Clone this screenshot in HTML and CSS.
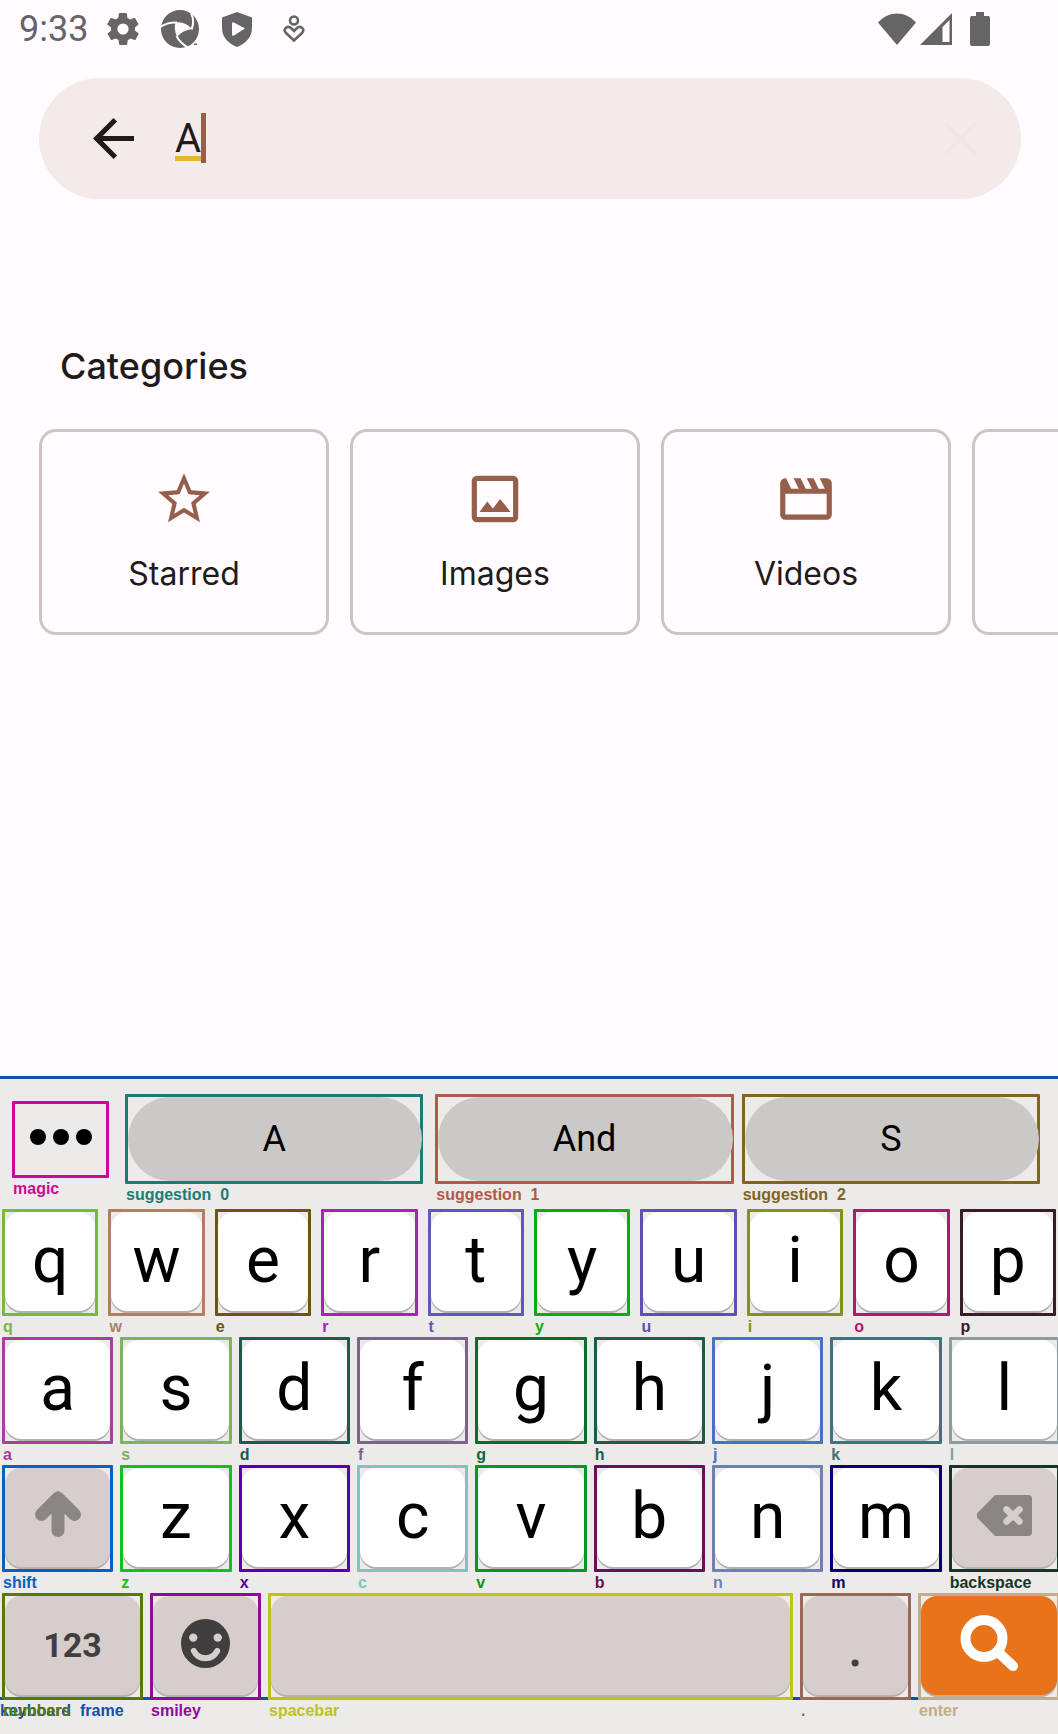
FILE: index.html
```html
<!DOCTYPE html>
<html lang="en">
<head>
<meta charset="utf-8">
<meta name="viewport" content="width=device-width, initial-scale=1">
<title>Search files</title>
<link rel="stylesheet" href="styles.css">
</head>
<body>
<header class="status">
  <span class="time">9:33</span>
  <svg class="st-gear" viewBox="2 2 20 20"><path d="M19.4 13c0-.3.1-.6.1-1s0-.7-.1-1l2.1-1.600c.2-.2.2-.4.1-.6l-2-3.500c-.1-.2-.4-.3-.6-.2l-2.500 1c-.5-.4-1.100-.7-1.700-1l-.4-2.600c0-.3-.2-.5-.5-.5h-4c-.2 0-.5.2-.5.4l-.4 2.700c-.6.2-1.100.6-1.700 1l-2.500-1c-.2-.1-.5 0-.6.2l-2 3.500c-.1.200-.1.500.1.600L4.600 11c0 .3-.1.600-.1 1s0 .7.1 1l-2.100 1.600c-.2.2-.2.4-.1.600l2 3.500c.1.2.4.3.6.2l2.500-1c.5.4 1.100.7 1.700 1l.4 2.600c0 .3.300.5.500.5h4c.2 0 .5-.2.5-.4l.4-2.700c.6-.2 1.100-.6 1.700-1l2.500 1c.2.100.5 0 .6-.2l2-3.500c.1-.2.100-.5-.1-.6zM12 15.500a3.500 3.500 0 1 1 0-7 3.500 3.500 0 0 1 0 7z"/></svg>
  <svg class="st-wheel" viewBox="0 0 40 40"><circle cx="20" cy="20" r="19"/><path class="cut" d="M15.500 13.500Q25 12 32 20Q23 21 17 28Q13.500 20 15.500 13.500z"/><path class="slit" d="M17 13.500Q8 13 0 18M31.500 20.500Q35 12 31 4M16.500 27Q20 34 28 38.500"/><path d="M34 34.500h3v1.500h-3z"/></svg>
  <svg class="st-shield" viewBox="0 0 30 36"><path d="M15 1L30 6.500V17c0 9-6 15.500-15 19C6 32.500 0 26 0 17V6.500z"/><path class="cut" d="M10 11.500h2l11 6-11 7h-2z"/></svg>
  <svg class="st-heart" viewBox="0 0 22 28"><g fill="none" stroke="#676468" stroke-width="2.600"><circle cx="11" cy="5.500" r="4"/><path d="M11 25.500l-8-7.500c-3.500-4 1.500-8 5-5l3 3 3-3c3.500-3 8.500 1 5 5z"/></g></svg>
  <span class="st-right">
    <svg class="st-wifi" viewBox="0 0 38 32"><path d="M0 9.500C11-2.500 27-2.500 38 9.500L19 32z"/></svg>
    <svg class="st-signal" viewBox="0 0 32 32"><path fill-rule="evenodd" d="M32 0v32H0zM29.500 7L22.500 14v15h7z"/></svg>
    <svg class="st-battery" viewBox="0 0 20 34"><path d="M6 0h8v4h4a2 2 0 0 1 2 2v26a2 2 0 0 1-2 2H2a2 2 0 0 1-2-2V6a2 2 0 0 1 2-2h4z"/></svg>
  </span>
</header>

<main>
  <form class="search">
    <button type="button" class="icon-btn" aria-label="Back"><svg class="back" viewBox="4 4 16 16"><path d="M20 11H7.800l5.600-5.600L12 4l-8 8 8 8 1.400-1.400L7.800 13H20z"/></svg></button>
    <div class="field">
      <input type="text" value="A" aria-label="Search">
      <span class="composing"></span><span class="caret"></span>
    </div>
    <button type="button" class="icon-btn clear" aria-label="Clear"><svg class="back" viewBox="4 4 16 16"><path d="M6 6l12 12M18 6L6 18" stroke="#f2e7e6" stroke-width="1.500"/></svg></button>
  </form>

  <h1>Categories</h1>
  <div class="cards">
    <button type="button" class="card">
      <svg viewBox="0 0 24 24"><path d="M22 9.240l-7.190-.62L12 2 9.190 8.630 2 9.240l5.460 4.730L5.820 21 12 17.270 18.180 21l-1.630-7.030L22 9.240zM12 15.400l-3.760 2.270 1-4.280-3.320-2.880 4.380-.38L12 6.100l1.710 4.040 4.380.38-3.320 2.880 1 4.280L12 15.400z"/></svg>
      <span>Starred</span></button>
    <button type="button" class="card">
      <svg viewBox="0 0 24 24"><path fill-rule="evenodd" d="M5 3h14a2 2 0 0 1 2 2v14a2 2 0 0 1-2 2H5a2 2 0 0 1-2-2V5a2 2 0 0 1 2-2zm0 2v14h14V5zM6 17l3-4 2.200 2.700L14 12l4 5z"/></svg>
      <span>Images</span></button>
    <button type="button" class="card">
      <svg viewBox="0 0 24 24"><path d="M17.300 4l2 4h-2.400l-2-4h-2.600l2 4h-2.400l-2-4H7.200l2 4H6.300l-2-4H4a2 2 0 0 0-2 2v12a2 2 0 0 0 2 2h16a2 2 0 0 0 2-2V6a2 2 0 0 0-2-2zM4 18v-8h16v8z"/></svg>
      <span>Videos</span></button>
    <button type="button" class="card" aria-label="More"></button>
  </div>
</main>

<section class="keyboard">
  <div class="suggestions">
    <div class="cell magic c-magic"><button type="button" aria-label="magic"><svg viewBox="0 0 62 16"><circle cx="8" cy="8" r="8"/><circle cx="31" cy="8" r="8"/><circle cx="54" cy="8" r="8"/></svg></button><span class="tag">magic</span></div>
    <div class="cell sug c-s0"><button type="button">A</button><span class="tag">suggestion&nbsp; 0</span></div>
    <div class="cell sug c-s1"><button type="button">And</button><span class="tag">suggestion&nbsp; 1</span></div>
    <div class="cell sug c-s2"><button type="button">S</button><span class="tag">suggestion&nbsp; 2</span></div>
  </div>
  <div class="row ten">
    <div class="cell c-q"><button type="button">q</button><span class="tag">q</span></div>
    <div class="cell c-w"><button type="button">w</button><span class="tag">w</span></div>
    <div class="cell c-e"><button type="button">e</button><span class="tag">e</span></div>
    <div class="cell c-r"><button type="button">r</button><span class="tag">r</span></div>
    <div class="cell c-t"><button type="button">t</button><span class="tag">t</span></div>
    <div class="cell c-y"><button type="button">y</button><span class="tag">y</span></div>
    <div class="cell c-u"><button type="button">u</button><span class="tag">u</span></div>
    <div class="cell c-i"><button type="button">i</button><span class="tag">i</span></div>
    <div class="cell c-o"><button type="button">o</button><span class="tag">o</span></div>
    <div class="cell c-p"><button type="button">p</button><span class="tag">p</span></div>
  </div>
  <div class="row nine">
    <div class="cell c-a"><button type="button">a</button><span class="tag">a</span></div>
    <div class="cell c-s"><button type="button">s</button><span class="tag">s</span></div>
    <div class="cell c-d"><button type="button">d</button><span class="tag">d</span></div>
    <div class="cell c-f"><button type="button">f</button><span class="tag">f</span></div>
    <div class="cell c-g"><button type="button">g</button><span class="tag">g</span></div>
    <div class="cell c-h"><button type="button">h</button><span class="tag">h</span></div>
    <div class="cell c-j"><button type="button">j</button><span class="tag">j</span></div>
    <div class="cell c-k"><button type="button">k</button><span class="tag">k</span></div>
    <div class="cell c-l"><button type="button">l</button><span class="tag">l</span></div>
  </div>
  <div class="row nine">
    <div class="cell fn c-shift"><button type="button" aria-label="shift"><svg class="shift" viewBox="0 0 46 46"><path d="M23 7v32.500M6.500 23.500L23 7l16.500 16.500" fill="none" stroke="#8a8685" stroke-width="13" stroke-linecap="round" stroke-linejoin="round"/></svg></button><span class="tag">shift</span></div>
    <div class="cell c-z"><button type="button">z</button><span class="tag">z</span></div>
    <div class="cell c-x"><button type="button">x</button><span class="tag">x</span></div>
    <div class="cell c-c"><button type="button">c</button><span class="tag">c</span></div>
    <div class="cell c-v"><button type="button">v</button><span class="tag">v</span></div>
    <div class="cell c-b"><button type="button">b</button><span class="tag">b</span></div>
    <div class="cell c-n"><button type="button">n</button><span class="tag">n</span></div>
    <div class="cell c-m"><button type="button">m</button><span class="tag">m</span></div>
    <div class="cell fn c-bksp"><button type="button" aria-label="backspace"><svg class="bksp" viewBox="0 0 55 41"><path d="M18 0h33a4 4 0 0 1 4 4v33a4 4 0 0 1-4 4H18L1 23.500a4 4 0 0 1 0-6z" fill="#8a8685"/><path d="M29.500 14.500l13 12M42.500 14.500l-13 12" stroke="#d7cecc" stroke-width="6.500" stroke-linecap="round"/></svg></button><span class="tag">backspace</span></div>
  </div>
  <div class="row bottom">
    <span class="frame-tag">keyboard&nbsp; frame</span>
    <div class="cell fn c-num"><button type="button" class="num">123</button><span class="tag">numbers</span></div>
    <div class="cell fn c-smile"><button type="button" aria-label="smiley"><svg class="smile" viewBox="0 0 50 50"><circle cx="25" cy="25" r="25" fill="#403e3e"/><circle cx="12.500" cy="19" r="4.300" fill="#d7cecc"/><circle cx="37.500" cy="19" r="4.300" fill="#d7cecc"/><path d="M13 32.500c5 10 19 10 24 0" fill="none" stroke="#d7cecc" stroke-width="6" stroke-linecap="round"/></svg></button><span class="tag">smiley</span></div>
    <div class="cell fn c-space"><button type="button" aria-label="spacebar"></button><span class="tag">spacebar</span></div>
    <div class="cell fn c-dot"><button type="button">.</button><span class="tag">.</span></div>
    <div class="cell go c-enter"><button type="button" aria-label="enter"><svg class="find" viewBox="0 0 58 56"><circle cx="24" cy="23.500" r="18.500" fill="none" stroke="#fff" stroke-width="10"/><path d="M38 37l15 14" stroke="#fff" stroke-width="10" stroke-linecap="round"/></svg></button><span class="tag">enter</span></div>
  </div>
</section>
</body>
</html>
```
FILE: styles.css
```css
* { box-sizing: border-box; }
html, body { margin: 0; }
body {
  display: flex;
  flex-direction: column;
  min-height: 100vh;
  overflow-x: hidden;
  background: #fffbff;
  color: #1f1b1a;
  font-family: Roboto, sans-serif;
}
svg { display: block; flex: none; }
button { border: 0; padding: 0; margin: 0; color: inherit; background: none; font: inherit; }

.status {
  display: flex;
  align-items: center;
  height: 58px;
  padding: 0 68px 0 19px;
  fill: #676468;
  color: #676468;
}
.time { width: 88px; font-size: 36px; line-height: 58px; }
.status .cut { fill: #fffbff; }
.status .slit { fill: none; stroke: #fffbff; stroke-width: 2; }
.st-gear { width: 32px; height: 32px; }
.st-wheel { width: 40px; height: 40px; margin-left: 21px; }
.st-shield { width: 30px; height: 36px; margin-left: 22px; }
.st-heart { width: 22px; height: 28px; margin-left: 31px; }
.st-right { display: flex; align-items: center; margin-left: auto; }
.st-wifi { width: 38px; height: 32px; }
.st-signal { width: 32px; height: 32px; margin: 0 18px 0 4px; }
.st-battery { width: 20px; height: 34px; }

.search {
  display: flex;
  align-items: center;
  height: 121px;
  margin: 20px 37px 0 39px;
  padding: 0 40px 0 54px;
  border-radius: 61px;
  background: #f4eae9;
}
.icon-btn { flex: none; }
.back { width: 41px; height: 41px; fill: #1f1b1a; }
.field { position: relative; flex: 1; margin-left: 41px; }
.field input {
  display: block;
  width: 100%;
  height: 60px;
  padding: 0;
  border: 0;
  outline: 0;
  background: none;
  color: #1f1b1a;
  font: 40px Roboto, sans-serif;
}
.composing { position: absolute; left: 0; top: 47px; width: 28px; height: 5px; background: #e6b534; }
.caret { position: absolute; left: 26px; top: 4px; width: 5px; height: 50px; background: #955f4b; }

h1 {
  margin: 144px 0 0 60px;
  font: 500 36px/46px Inter, sans-serif;
}
.cards {
  display: flex;
  gap: 21px;
  margin: 40px 0 60px;
  padding-left: 39px;
  overflow: hidden;
}
.card {
  display: flex;
  flex: none;
  flex-direction: column;
  align-items: center;
  gap: 24px;
  width: 290px;
  height: 206px;
  padding-top: 36px;
  border: 3px solid #cfc4c1;
  border-radius: 17px;
  font: 32px/40px Inter, sans-serif;
}
.card svg { width: 62px; height: 62px; fill: #955f4b; }

.keyboard {
  margin-top: auto;
  padding-bottom: 13px;
  overflow: hidden;
  border-top: 3px solid #1450a8;
  background: #ecebe9;
}
.cell { position: relative; min-width: 0; color: var(--c); }
.cell button {
  position: relative;
  z-index: 0;
  display: flex;
  align-items: center;
  justify-content: center;
  width: 100%;
  height: 107px;
  padding-bottom: 4px;
  border: 3px solid var(--c);
  border-radius: 1px;
  color: #000;
  background: #ecebe9;
  font-size: 64px;
  line-height: 64px;
}
.cell button::before {
  content: "";
  position: absolute;
  z-index: -1;
  inset: 0 0 2px;
  border-radius: 16px;
  background: #fff;
  box-shadow: 0 2px 0 #b4b1af;
}
.fn button::before { background: #d7cecc; }
.go button::before { background: #e8731a; }
.tag {
  display: block;
  height: 21px;
  padding-left: 1px;
  font: bold 16px/21px "Liberation Sans", sans-serif;
  white-space: nowrap;
}
.suggestions {
  display: flex;
  align-items: flex-end;
  gap: 8px;
  padding: 15px 18px 4px 12px;
}
.magic { flex: none; width: 97px; align-self: center; }
.magic button { height: 77px; }
.magic svg { width: 62px; height: 16px; }
.magic button::before { display: none; }
.sug { flex: 1; }
.c-s0 { margin-left: 8px; }
.c-s1 { margin-left: 4px; }
.sug button { height: 90px; padding: 0; font-size: 36px; line-height: 40px; }
.sug button::before { inset: 0 -2px 0 0; border-radius: 42px; background: #cac9c7; box-shadow: none; }

.row { display: grid; position: relative; }
.ten { grid-template-columns: repeat(10, 1fr); gap: 10px; padding: 0 2px; }
.nine { grid-template-columns: repeat(9, 1fr); gap: 7px; margin: 0 -2px 0 2px; }
.bottom { grid-template-columns: 141fr 111fr 525fr 111fr 142fr; gap: 7px; margin: 0 -2px 0 2px; }
.bottom::before { content: ""; position: absolute; left: -2px; right: 0; top: 104px; height: 3px; background: #1450a8; }
.frame-tag {
  position: absolute;
  left: -2px;
  top: 107px;
  color: #1450a8;
  font: bold 16px/21px "Liberation Sans", sans-serif;
  white-space: nowrap;
}
.cell .num { color: #403e3e; font-size: 34px; font-weight: 700; line-height: 40px; }
.c-dot button { color: #403e3e; }
.fn svg, .go svg { margin-bottom: 3px; }
.cell .shift { width: 46px; height: 46px; margin-bottom: 6px; }
.bksp { width: 55px; height: 41px; }
.smile { width: 49px; height: 49px; }
.find { width: 58px; height: 56px; }

.c-magic { --c: #cc0894; } .c-s0 { --c: #1c7c74; } .c-s1 { --c: #b4584c; } .c-s2 { --c: #806420; }
.c-q { --c: #7ab83f; } .c-w { --c: #b08060; } .c-e { --c: #6b5513; } .c-r { --c: #a127b0; }
.c-t { --c: #6058b8; } .c-y { --c: #0cab10; } .c-u { --c: #5c50b4; } .c-i { --c: #85911f; }
.c-o { --c: #b01868; } .c-p { --c: #381c28; }
.c-a { --c: #a5409b; } .c-s { --c: #80b062; } .c-d { --c: #1c5c50; } .c-f { --c: #7c6488; }
.c-g { --c: #0c6c30; } .c-h { --c: #1c5c48; } .c-j { --c: #4870c4; } .c-k { --c: #40747c; } .c-l { --c: #8c9ca0; }
.c-shift { --c: #0860c0; } .c-z { --c: #14c020; } .c-x { --c: #5400b8; } .c-c { --c: #80c4bc; }
.c-v { --c: #089820; } .c-b { --c: #681058; } .c-n { --c: #7080b0; } .c-m { --c: #080070; } .c-bksp { --c: #183428; }
.c-num { --c: #587808; } .c-smile { --c: #900c98; } .c-space { --c: #bcc41c; } .c-dot { --c: #986858; } .c-enter { --c: #c4ac88; }
```
